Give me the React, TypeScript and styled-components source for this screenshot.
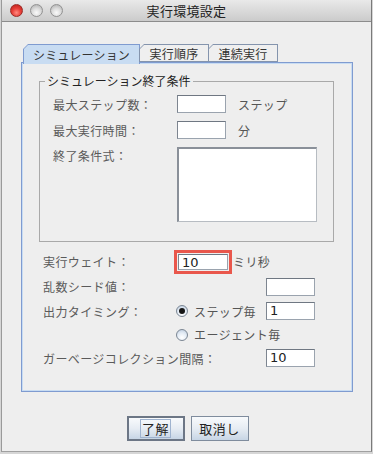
import React from 'react';
import styled, { createGlobalStyle } from 'styled-components';

const GlobalStyle = createGlobalStyle`
	html, body {
		margin: 0;
		padding: 0;
		background: #d6d6d6;
	}
	body {
		width: 373px;
		height: 454px;
		overflow: hidden;
		font-family: 'Noto Sans CJK JP', 'Noto Sans', sans-serif;
	}
`;

const Window = styled.div`
	box-sizing: border-box;
	width: 371px;
	height: 452px;
	margin-left: 1px;
	background: #eeeeee;
	border-left: 1px solid #9a9a9a;
	border-right: 1px solid #7a7a7a;
	border-bottom: 1px solid #a0a0a0;
	display: flex;
	flex-direction: column;
`;

const TitleBar = styled.div`
	box-sizing: border-box;
	height: 22px;
	display: grid;
	grid-template-columns: 1fr auto 1fr;
	align-items: center;
	background: linear-gradient(to bottom, #e9e9e9, #cbcbcb);
	border-bottom: 1px solid #8c8c8c;
`;

const Lights = styled.div`
	display: flex;
	gap: 7px;
	padding-left: 8px;
`;

const Light = styled.span<{ $red?: boolean }>`
	box-sizing: border-box;
	width: 13px;
	height: 13px;
	border-radius: 50%;
	border: 1px solid ${(p) => (p.$red ? '#9a2b26' : '#929292')};
	background: ${(p) =>
		p.$red
			? 'radial-gradient(circle at 50% 70%, #ff8a80 0%, #e8403a 45%, #b81c16 100%)'
			: 'radial-gradient(circle at 50% 70%, #fafafa 0%, #dcdcdc 45%, #a9a9a9 100%)'};
`;

const Title = styled.div`
	font-size: 13px;
	color: #222;
	letter-spacing: 0.3px;
`;

const Body = styled.div`
	padding: 22px 18px 0 19px;
`;

const TabStrip = styled.div`
	display: flex;
	height: 18px;
	padding-left: 2px;
	position: relative;
	z-index: 1;
`;

const Tab = styled.div<{ $active?: boolean; $w: number }>`
	box-sizing: border-box;
	width: ${(p) => p.$w}px;
	height: ${(p) => (p.$active ? 20 : 18)}px;
	margin-left: -1px;
	padding: 1px 1px ${(p) => (p.$active ? 0 : 1)}px 1px;
	background: ${(p) => (p.$active ? '#7f9bd0' : '#8494ad')};
	clip-path: polygon(5px 0, 100% 0, 100% 100%, 0 100%, 0 5px);
	&:first-child {
		margin-left: 0;
	}
`;

const TabFace = styled.div<{ $active?: boolean }>`
	height: 100%;
	display: flex;
	align-items: center;
	justify-content: center;
	background: ${(p) => (p.$active ? '#c8dcf2' : '#efefef')};
	clip-path: polygon(4px 0, 100% 0, 100% 100%, 0 100%, 0 4px);
	font-size: 12px;
	color: #333;
	letter-spacing: 0.2px;
`;

const Panel = styled.div`
	box-sizing: border-box;
	height: 330px;
	border: 1px solid #7f9bd0;
	box-shadow: inset 0 0 0 1px #c8dcf2;
	padding: 1px;
`;

const GroupBox = styled.div`
	position: relative;
	margin: 17px 17px 0 16px;
	border: 1px solid #a9a9a9;
	padding: 13px 0 19px 13px;
	display: grid;
	grid-template-columns: 112px 49px auto;
	grid-template-rows: 18px 18px 75px;
	row-gap: 8px;
	column-gap: 12px;
	align-items: center;
`;

const Legend = styled.div`
	position: absolute;
	top: -9px;
	left: 5px;
	padding: 0 2px 0 2px;
	background: #eeeeee;
	font-size: 12px;
	line-height: 16px;
	color: #222;
`;

const Label = styled.div<{ $top?: boolean; $span?: number }>`
	font-size: 12px;
	color: #5a5a5a;
	white-space: nowrap;
	letter-spacing: 0.4px;
	${(p) => (p.$top ? 'align-self: start; margin-top: 0px;' : '')}
	${(p) => (p.$span ? `grid-column: span ${p.$span};` : '')}
`;

const Unit = styled.div`
	font-size: 12px;
	color: #555;
	white-space: nowrap;
	letter-spacing: 0.4px;
`;

const Field = styled.div<{ $w?: number; $h?: number }>`
	box-sizing: border-box;
	width: ${(p) => p.$w ?? 49}px;
	height: ${(p) => p.$h ?? 18}px;
	background: #fff;
	border: 1px solid #9aa3ae;
	border-top-color: #6f7782;
	border-left-color: #7d8590;
	padding-left: 3px;
	font-family: 'DejaVu Sans', sans-serif;
	font-size: 13px;
	line-height: 16px;
	color: #222;
`;

const TextArea = styled.div`
	box-sizing: border-box;
	width: 140px;
	height: 75px;
	grid-column: span 2;
	background: #fff;
	border: 2px solid #8a9099;
	border-right-width: 1px;
	border-bottom-width: 1px;
	border-right-color: #b7bcc2;
	border-bottom-color: #b7bcc2;
	align-self: start;
`;

const Options = styled.div`
	display: grid;
	grid-template-columns: 133px 90px 49px;
	grid-template-rows: 25px 25px 24px 23px 24px;
	align-items: center;
	margin-top: 7px;
	padding-left: 20px;
`;

const Inline = styled.div<{ $span?: number }>`
	display: flex;
	align-items: center;
	${(p) => (p.$span ? `grid-column: span ${p.$span};` : '')}
`;

const Highlight = styled.div`
	margin-left: 2px;
	margin-right: 5px;
	outline: 3px solid #e9574c;
	outline-offset: 1px;
`;

const Radio = styled.span<{ $on?: boolean }>`
	box-sizing: border-box;
	width: 12px;
	height: 12px;
	margin-right: 6px;
	border-radius: 50%;
	border: 1px solid #7b8693;
	background: radial-gradient(circle at 50% 75%, #ffffff 0%, #e4ecf5 50%, #b9c9dc 100%);
	display: inline-flex;
	align-items: center;
	justify-content: center;
	&::after {
		content: '';
		width: 6px;
		height: 6px;
		border-radius: 50%;
		background: #151515;
		display: ${(p) => (p.$on ? 'block' : 'none')};
	}
`;

const ButtonRow = styled.div`
	display: flex;
	justify-content: center;
	gap: 6px;
	margin-top: 24px;
	padding-left: 1px;
`;

const Button = styled.div<{ $default?: boolean }>`
	box-sizing: border-box;
	width: 58px;
	height: 25px;
	display: flex;
	align-items: center;
	justify-content: center;
	border: ${(p) => (p.$default ? '2px solid #6c7685' : '1px solid #7f8c9d')};
	background: linear-gradient(to bottom, #f8fafc 0%, #e6ecf3 50%, #c7d5e5 100%);
	font-size: 13px;
	color: #222;
	letter-spacing: 0.5px;
`;

const FocusRing = styled.span`
	border: 1px solid #9fb3cf;
	padding: 0 1px;
	line-height: 17px;
`;

export default function App() {
	return (
		<>
			<GlobalStyle />
			<Window>
				<TitleBar>
					<Lights>
						<Light $red />
						<Light />
						<Light />
					</Lights>
					<Title>実行環境設定</Title>
					<div />
				</TitleBar>
				<Body>
					<TabStrip>
						<Tab $active $w={117}>
							<TabFace $active>シミュレーション</TabFace>
						</Tab>
						<Tab $w={70}>
							<TabFace>実行順序</TabFace>
						</Tab>
						<Tab $w={70}>
							<TabFace>連続実行</TabFace>
						</Tab>
					</TabStrip>
					<Panel>
						<GroupBox>
							<Legend>シミュレーション終了条件</Legend>
							<Label>最大ステップ数：</Label>
							<Field />
							<Unit>ステップ</Unit>
							<Label>最大実行時間：</Label>
							<Field />
							<Unit>分</Unit>
							<Label $top>終了条件式：</Label>
							<TextArea />
						</GroupBox>
						<Options>
							<Label>実行ウェイト：</Label>
							<Inline $span={2}>
								<Highlight>
									<Field $w={50} $h={16}>10</Field>
								</Highlight>
								<Unit>ミリ秒</Unit>
							</Inline>
							<Label $span={2}>乱数シード値：</Label>
							<Field />
							<Label>出力タイミング：</Label>
							<Inline>
								<Radio $on />
								<Unit>ステップ毎</Unit>
							</Inline>
							<Field>1</Field>
							<div />
							<Inline $span={2}>
								<Radio />
								<Unit>エージェント毎</Unit>
							</Inline>
							<Label $span={2}>ガーベージコレクション間隔：</Label>
							<Field>10</Field>
						</Options>
					</Panel>
					<ButtonRow>
						<Button $default>
							<FocusRing>了解</FocusRing>
						</Button>
						<Button>取消し</Button>
					</ButtonRow>
				</Body>
			</Window>
		</>
	);
}
